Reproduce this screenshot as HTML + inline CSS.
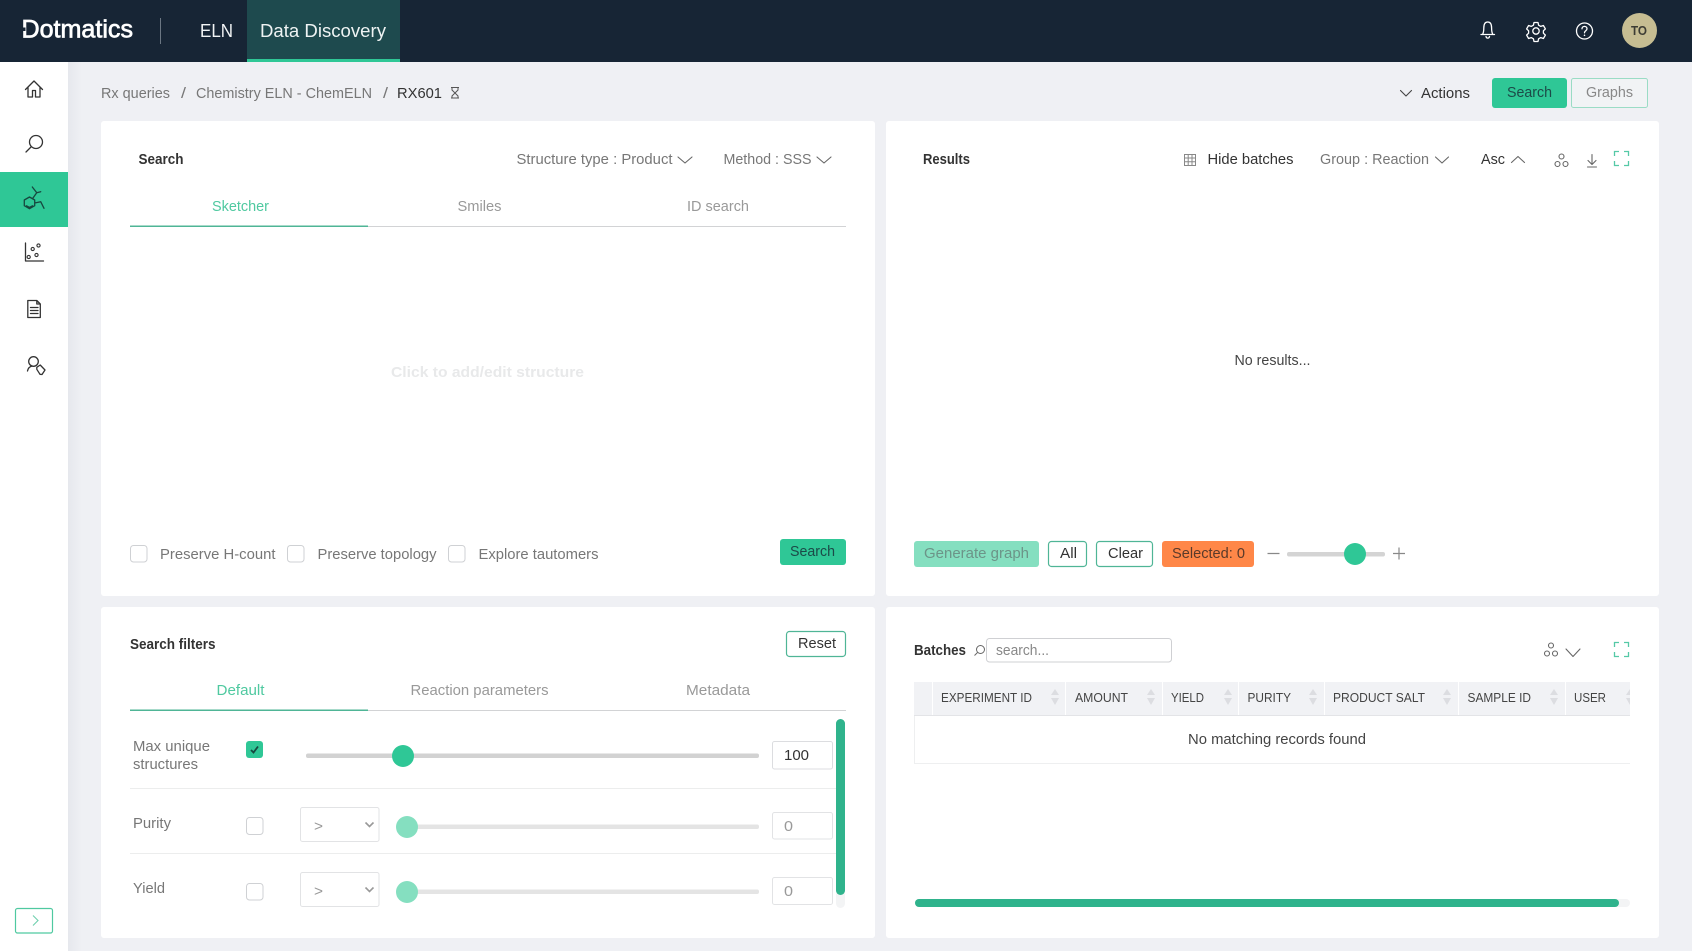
<!DOCTYPE html>
<html lang="en"><head><meta charset="utf-8"><title>Data Discovery</title>
<style>
html,body{margin:0;padding:0;background:#eff0f4;width:1692px;height:951px;overflow:hidden}
svg{display:block}
text{font-family:"Liberation Sans",sans-serif;font-size:15px;fill:#777}
.d{fill:#333}.g{fill:#4fc9a0}.m{fill:#999}.b{font-weight:bold;fill:#333;font-size:14.5px}
.th{font-size:12.5px;fill:#444}
.ic{fill:none;stroke:#333;stroke-width:1.3;stroke-linecap:round;stroke-linejoin:round}
.ig{fill:none;stroke:#666;stroke-width:1.1;stroke-linecap:round;stroke-linejoin:round}
.gr{fill:none;stroke:#55c9a6;stroke-width:1.3}
.w{fill:none;stroke:#fff;stroke-width:1.3;stroke-linecap:round;stroke-linejoin:round}
.cb{fill:#fff;stroke:#cfd1d4;stroke-width:1}
.ip{fill:#fff;stroke:#e2e3e5;stroke-width:1}
.btn{fill:#fff;stroke:#4fb596;stroke-width:1.2}
.ch{fill:none;stroke:#666;stroke-width:1.1;stroke-linecap:round;stroke-linejoin:round}
.s{fill:#dcdde1}
</style></head>
<body>
<svg xmlns="http://www.w3.org/2000/svg" width="1692" height="951" viewBox="0 0 1692 951">
<defs><linearGradient id="sh" x1="0" x2="1" y1="0" y2="0"><stop offset="0" stop-color="#e6e8ed"/><stop offset="1" stop-color="#eff0f4"/></linearGradient></defs>
<rect width="1692" height="951" fill="#eff0f4"/>
<rect x="68" y="62" width="14" height="889" fill="url(#sh)"/>

<!-- Header -->
<rect width="1692" height="62" fill="#172535"/>
<text x="21.500" y="37.500" style="font-size:25px;fill:#fff;stroke:#fff;stroke-width:.7" textLength="111.500" lengthAdjust="spacingAndGlyphs">Dotmatics</text>
<rect x="20" y="27.500" width="5.500" height="3.500" fill="#172535"/>
<rect x="160" y="18" width="1" height="26" fill="#6b7682"/>
<text x="200" y="37" style="font-size:18px;fill:#f2f4f5" textLength="33" lengthAdjust="spacingAndGlyphs">ELN</text>
<rect x="247" y="0" width="153" height="62" fill="#1e4a4e"/>
<rect x="247" y="59" width="153" height="3" fill="#2fc796"/>
<text x="260" y="37" style="font-size:18px;fill:#eef3f3" textLength="126" lengthAdjust="spacingAndGlyphs">Data Discovery</text>
<!-- bell -->
<path class="w" d="M1481 34.500h13.500M1482.500 34.500c1-1.500 1.300-3 1.300-6.500 0-4 1.500-6 3.900-6s3.900 2 3.900 6c0 3.500.3 5 1.300 6.500M1486 36.500c.5 2.200 3 2.200 3.500 0"/>
<!-- gear -->
<path class="w" d="M1534 22.500h4l.6 2.700 2.200 1.200 2.600-.9 2 3.400-2 1.900v2.400l2 1.900-2 3.400-2.600-.9-2.200 1.200-.6 2.700h-4l-.6-2.700-2.200-1.200-2.600.9-2-3.400 2-1.900v-2.400l-2-1.900 2-3.400 2.600.9 2.200-1.200z"/>
<circle class="w" cx="1536" cy="31" r="3.200"/>
<!-- help -->
<circle class="w" cx="1584.500" cy="31" r="8"/>
<path class="w" d="M1582 28.800c0-3.200 5-3.200 5 0 0 2-2.500 2-2.500 4"/><circle cx="1584.500" cy="35.300" r=".8" fill="#fff"/>
<circle cx="1639.500" cy="30.500" r="17.500" fill="#c6bd92"/>
<text x="1631" y="35" style="font-size:12.500px;font-weight:bold;fill:#3c3c34" textLength="16" lengthAdjust="spacingAndGlyphs">TO</text>

<!-- Sidebar -->
<rect x="0" y="62" width="68" height="889" fill="#fff"/>
<path class="ic" d="M25.500 89.500 34 81l8.500 8.500M28 87.500V97h4.500v-6.500h3V97H40v-9.500"/>
<circle class="ic" cx="36" cy="142" r="6.500"/><path class="ic" d="M31 147l-5 5"/>
<rect x="0" y="172" width="68" height="55" fill="#2fc796"/>
<g class="ic" style="stroke:#17483f"><path d="M29.500 197l5.200 3v5.700l-5.200 3-5.200-3V200zM26.500 205.800l3 1.700 3-1.700M32.300 187l4.400 5.700 4-1M36.700 192.700l-3.700 5.300M34.700 203l6-1.300 3.300 6.600"/></g>
<path class="ic" d="M25.500 243v18h18"/>
<g class="ic" style="stroke-width:1.100"><circle cx="38.500" cy="245.500" r="1.600"/><circle cx="32.700" cy="249" r="1.600"/><circle cx="36.500" cy="255" r="1.600"/><circle cx="28.700" cy="257" r="1.600"/></g>
<path class="ic" d="M27.800 300.500h9l3.500 3.500v13.500H27.800zM36.800 300.500v3.500h3.500M30.500 307.500h7.500M30.500 310.500h7.500M30.500 313.500h7.500"/>
<circle class="ic" cx="33.500" cy="361.500" r="4.800"/>
<path class="ic" d="M27.500 371c.6-2.800 2.500-4.500 4.500-5M36.800 367.300l3.400-2.300 4.800 5-3 4.500-2-.2-3.200-5z"/>
<rect x="15.500" y="908.500" width="37" height="24.500" rx="2" fill="#fff" stroke="#4fc9a0" stroke-width="1.200"/>
<path d="M33 915.500l5 5-5 5" fill="none" stroke="#6fcfae" stroke-width="1.100"/>

<!-- Breadcrumb bar -->
<text x="101" y="98" textLength="69" lengthAdjust="spacingAndGlyphs">Rx queries</text>
<text x="181" y="98" textLength="5" lengthAdjust="spacingAndGlyphs">/</text>
<text x="196" y="98" textLength="176" lengthAdjust="spacingAndGlyphs">Chemistry ELN - ChemELN</text>
<text x="383" y="98" textLength="5" lengthAdjust="spacingAndGlyphs">/</text>
<text x="397" y="98" class="d" style="font-weight:500" textLength="45" lengthAdjust="spacingAndGlyphs">RX601</text>
<path d="M451 87.500h8M451 98h8M452 88v2l3 3-3 3v2M458 88v2l-3 3 3 3v2" fill="none" stroke="#555" stroke-width="1"/>
<path class="ch" style="stroke:#444" d="M1400.500 90.500l5.500 5.500 5.500-5.500"/>
<text x="1421" y="98" class="d" textLength="49" lengthAdjust="spacingAndGlyphs">Actions</text>
<rect x="1492" y="78" width="75" height="30" rx="3" fill="#2fc796"/>
<text x="1507" y="97" style="fill:#1c4a48" textLength="45" lengthAdjust="spacingAndGlyphs">Search</text>
<rect x="1571.500" y="78.500" width="76" height="29" rx="2" fill="#f1f3f5" stroke="#9adcc5"/>
<text x="1586" y="97" style="fill:#888" textLength="47" lengthAdjust="spacingAndGlyphs">Graphs</text>

<!-- Cards -->
<rect x="101" y="121" width="774" height="475" rx="3" fill="#fff"/>
<rect x="886" y="121" width="773" height="475" rx="3" fill="#fff"/>
<rect x="101" y="607" width="774" height="331" rx="3" fill="#fff"/>
<rect x="886" y="607" width="773" height="331" rx="3" fill="#fff"/>

<!-- Search card -->
<text x="138.500" y="164" class="b" textLength="45" lengthAdjust="spacingAndGlyphs">Search</text>
<text x="516.500" y="164" textLength="156" lengthAdjust="spacingAndGlyphs">Structure type : Product</text>
<path class="ch" d="M678 157l7 6 7-6"/>
<text x="723.500" y="164" textLength="88" lengthAdjust="spacingAndGlyphs">Method : SSS</text>
<path class="ch" d="M817 157l7 6 7-6"/>
<text x="212" y="211" class="g" textLength="57" lengthAdjust="spacingAndGlyphs">Sketcher</text>
<text x="457.500" y="211" class="m" textLength="44" lengthAdjust="spacingAndGlyphs">Smiles</text>
<text x="687" y="211" class="m" textLength="62" lengthAdjust="spacingAndGlyphs">ID search</text>
<rect x="130" y="226" width="716" height="1" fill="#d2d3d5"/>
<rect x="130" y="225.500" width="238" height="1.500" fill="#4fb596"/>
<text x="391" y="377" style="font-weight:bold;fill:#e8e9ea" textLength="193" lengthAdjust="spacingAndGlyphs">Click to add/edit structure</text>
<rect class="cb" x="130.500" y="545.500" width="16.500" height="16.500" rx="3"/>
<text x="160" y="559" textLength="115.500" lengthAdjust="spacingAndGlyphs">Preserve H-count</text>
<rect class="cb" x="287.500" y="545.500" width="16.500" height="16.500" rx="3"/>
<text x="317.500" y="559" textLength="119" lengthAdjust="spacingAndGlyphs">Preserve topology</text>
<rect class="cb" x="448.500" y="545.500" width="16.500" height="16.500" rx="3"/>
<text x="478.500" y="559" textLength="120" lengthAdjust="spacingAndGlyphs">Explore tautomers</text>
<rect x="780" y="539" width="66" height="26" rx="3" fill="#2fc796"/>
<text x="790" y="556" style="fill:#1c4a48" textLength="45" lengthAdjust="spacingAndGlyphs">Search</text>

<!-- Results card -->
<text x="923" y="164" class="b" textLength="47" lengthAdjust="spacingAndGlyphs">Results</text>
<g fill="none" stroke="#888" stroke-width="1"><rect x="1184.500" y="154.500" width="11" height="11"/><path d="M1184.500 158h11M1184.500 161.700h11M1188.200 154.500v11M1192 154.500v11"/></g>
<text x="1207.500" y="164" class="d" textLength="86" lengthAdjust="spacingAndGlyphs">Hide batches</text>
<text x="1320" y="164" textLength="109" lengthAdjust="spacingAndGlyphs">Group : Reaction</text>
<path class="ch" d="M1435.500 157l6.500 6 6.500-6"/>
<text x="1481" y="164" class="d" textLength="24" lengthAdjust="spacingAndGlyphs">Asc</text>
<path class="ch" d="M1511.500 162.500l6.500-6 6.500 6"/>
<g class="ig"><circle cx="1561.500" cy="156.500" r="2.500"/><circle cx="1557.500" cy="164" r="2.500"/><circle cx="1565.500" cy="164" r="2.500"/></g>
<path class="ig" d="M1592 154.500v10M1588 160.500l4 4 4-4M1587.500 167h9"/>
<path class="gr" d="M1614.500 156v-4.500h4.500M1624 151.500h4.500v4.500M1628.500 161v4.500H1624M1619 165.500h-4.500V161"/>
<text x="1234.500" y="365" style="fill:#444" textLength="76" lengthAdjust="spacingAndGlyphs">No results...</text>
<rect x="914" y="541" width="125" height="26" rx="3" fill="#85dfc0"/>
<text x="924" y="558" style="fill:#6c9488" textLength="105" lengthAdjust="spacingAndGlyphs">Generate graph</text>
<rect class="btn" x="1048.500" y="541.500" width="38" height="25" rx="3"/>
<text x="1060" y="558" class="d" textLength="17" lengthAdjust="spacingAndGlyphs">All</text>
<rect class="btn" x="1096.500" y="541.500" width="56" height="25" rx="3"/>
<text x="1108" y="558" class="d" textLength="35" lengthAdjust="spacingAndGlyphs">Clear</text>
<rect x="1162" y="541" width="92" height="26" rx="3" fill="#ff8748"/>
<text x="1172" y="558" style="fill:#5a3a2a" textLength="73" lengthAdjust="spacingAndGlyphs">Selected: 0</text>
<path d="M1267.500 553.500h12M1393 553.500h12M1399 547.500v12" stroke="#888" stroke-width="1.200" fill="none"/>
<rect x="1287" y="552" width="98" height="4.500" rx="2" fill="#d4d4d4"/>
<circle cx="1355" cy="554" r="11" fill="#2fc796"/>

<!-- Filters card -->
<text x="130" y="649" class="b" textLength="85.500" lengthAdjust="spacingAndGlyphs">Search filters</text>
<rect class="btn" x="786.500" y="631.500" width="59" height="25" rx="3"/>
<text x="798" y="648" class="d" textLength="38" lengthAdjust="spacingAndGlyphs">Reset</text>
<text x="216.500" y="695" class="g" textLength="48" lengthAdjust="spacingAndGlyphs">Default</text>
<text x="410.500" y="695" class="m" textLength="138" lengthAdjust="spacingAndGlyphs">Reaction parameters</text>
<text x="686" y="695" class="m" textLength="64" lengthAdjust="spacingAndGlyphs">Metadata</text>
<rect x="130" y="710" width="716" height="1" fill="#d2d3d5"/>
<rect x="130" y="709.500" width="238" height="1.500" fill="#4fb596"/>

<text x="133" y="751" textLength="77" lengthAdjust="spacingAndGlyphs">Max unique</text>
<text x="133" y="769" textLength="65" lengthAdjust="spacingAndGlyphs">structures</text>
<rect x="246" y="741" width="17" height="17" rx="3" fill="#2fc796"/>
<path d="M251 750l2.500 2.500 4.500-6" fill="none" stroke="#17483f" stroke-width="1.800"/>
<rect x="306" y="753.500" width="453" height="4.500" rx="2" fill="#d2d2d2"/>
<circle cx="403" cy="756" r="11" fill="#2fc796"/>
<rect class="cb" x="772.500" y="741.500" width="60" height="27.500" rx="2" style="stroke:#dcdde0"/>
<text x="784" y="760" class="d" textLength="25" lengthAdjust="spacingAndGlyphs">100</text>
<rect x="130" y="788" width="706" height="1" fill="#eceded"/>

<text x="133" y="828" textLength="38" lengthAdjust="spacingAndGlyphs">Purity</text>
<rect class="cb" x="246.500" y="817.500" width="16.500" height="17" rx="3"/>
<rect class="ip" x="300.500" y="807.500" width="78.500" height="34" rx="2"/>
<text x="314" y="831" class="m" textLength="9" lengthAdjust="spacingAndGlyphs">&gt;</text>
<path d="M365.500 822.500l4 4 4-4" fill="none" stroke="#999" stroke-width="1.600"/>
<rect x="407" y="824.500" width="352" height="4.500" rx="2" fill="#e4e4e4"/>
<circle cx="407" cy="827" r="11" fill="#85dfc0"/>
<rect class="ip" x="772.500" y="812.500" width="60" height="26.500" rx="2"/>
<text x="784" y="831" class="m" textLength="9" lengthAdjust="spacingAndGlyphs">0</text>
<rect x="130" y="853" width="706" height="1" fill="#eceded"/>

<text x="133" y="893" textLength="32" lengthAdjust="spacingAndGlyphs">Yield</text>
<rect class="cb" x="246.500" y="883.500" width="16.500" height="16.500" rx="3"/>
<rect class="ip" x="300.500" y="872.500" width="78.500" height="34" rx="2"/>
<text x="314" y="896" class="m" textLength="9" lengthAdjust="spacingAndGlyphs">&gt;</text>
<path d="M365.500 887.500l4 4 4-4" fill="none" stroke="#999" stroke-width="1.600"/>
<rect x="407" y="889.500" width="352" height="4.500" rx="2" fill="#e4e4e4"/>
<circle cx="407" cy="892" r="11" fill="#85dfc0"/>
<rect class="ip" x="772.500" y="877.500" width="60" height="27" rx="2"/>
<text x="784" y="896" class="m" textLength="9" lengthAdjust="spacingAndGlyphs">0</text>

<rect x="836" y="719" width="9" height="189" rx="4.500" fill="#f3f4f5"/>
<rect x="836" y="719" width="9" height="176" rx="4.500" fill="#2fb38c"/>

<!-- Batches card -->
<text x="914" y="655" class="b" textLength="52" lengthAdjust="spacingAndGlyphs">Batches</text>
<circle cx="980.500" cy="649.500" r="4" fill="none" stroke="#666" stroke-width="1"/><path d="M977.500 652.500l-3 3" stroke="#666" stroke-width="1"/>
<rect x="986.500" y="638.500" width="185" height="23.500" rx="3" fill="#fff" stroke="#cfd0d3"/>
<text x="996" y="655" textLength="53" lengthAdjust="spacingAndGlyphs" style="fill:#888">search...</text>
<g class="ig"><circle cx="1551" cy="645.500" r="2.500"/><circle cx="1547" cy="653.500" r="2.500"/><circle cx="1555" cy="653.500" r="2.500"/></g>
<path class="ch" d="M1566 649l7 7.500 7-7.500"/>
<path class="gr" d="M1614.500 647v-4.500h4.500M1624 642.500h4.500v4.500M1628.500 652v4.500H1624M1619 656.500h-4.500V652"/>

<rect x="914" y="682" width="716" height="33" fill="#f1f2f5"/>
<rect x="914" y="715" width="716" height="1" fill="#e3e4e7"/>
<g fill="#fff"><rect x="932" y="682" width="1" height="33"/><rect x="1065" y="682" width="1" height="33"/><rect x="1162" y="682" width="1" height="33"/><rect x="1238" y="682" width="1" height="33"/><rect x="1324" y="682" width="1" height="33"/><rect x="1458" y="682" width="1" height="33"/><rect x="1565" y="682" width="1" height="33"/></g>
<text x="941" y="702" class="th" textLength="91" lengthAdjust="spacingAndGlyphs">EXPERIMENT ID</text>
<text x="1075" y="702" class="th" textLength="53" lengthAdjust="spacingAndGlyphs">AMOUNT</text>
<text x="1171" y="702" class="th" textLength="33" lengthAdjust="spacingAndGlyphs">YIELD</text>
<text x="1247.500" y="702" class="th" textLength="43.500" lengthAdjust="spacingAndGlyphs">PURITY</text>
<text x="1333" y="702" class="th" textLength="92" lengthAdjust="spacingAndGlyphs">PRODUCT SALT</text>
<text x="1467.500" y="702" class="th" textLength="63.500" lengthAdjust="spacingAndGlyphs">SAMPLE ID</text>
<text x="1574" y="702" class="th" textLength="32" lengthAdjust="spacingAndGlyphs">USER</text>
<g class="s">
<path d="M1051 695l4-6 4 6zM1051 698l4 7 4-7z"/>
<path d="M1147 695l4-6 4 6zM1147 698l4 7 4-7z"/>
<path d="M1224 695l4-6 4 6zM1224 698l4 7 4-7z"/>
<path d="M1309 695l4-6 4 6zM1309 698l4 7 4-7z"/>
<path d="M1443 695l4-6 4 6zM1443 698l4 7 4-7z"/>
<path d="M1550 695l4-6 4 6zM1550 698l4 7 4-7z"/>
<path d="M1626 695l4-6v6zM1626 698l4 7v-7z"/>
</g>
<rect x="914" y="716" width="1" height="47" fill="#eeeff0"/>
<rect x="914" y="763" width="716" height="1" fill="#eeeff0"/>
<text x="1188" y="744" style="fill:#444" textLength="178" lengthAdjust="spacingAndGlyphs">No matching records found</text>
<rect x="915" y="899" width="715" height="8" rx="4" fill="#f3f4f5"/>
<rect x="915" y="899" width="704" height="8" rx="4" fill="#2fb38c"/>
</svg>
</body></html>
